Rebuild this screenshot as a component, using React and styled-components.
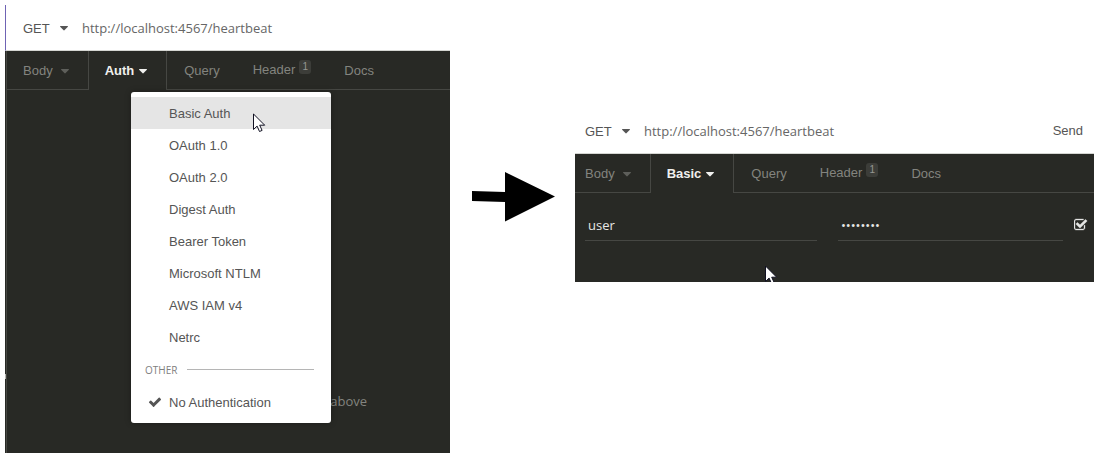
import React from "react";
import styled, { createGlobalStyle } from "styled-components";

const sans = `"Liberation Sans", Arial, sans-serif`;
const open = `"Open Sans", "Noto Sans", sans-serif`;
const dark = "#282925";
const line = "#464743";

const Global = createGlobalStyle`
  *, *::before { box-sizing: border-box; }
  body { margin: 0; background: #fff; font: 13px/20px ${sans}; color: #555; }
  button, input, select { font: inherit; color: inherit; background: none; border: 0; margin: 0; padding: 0; outline: 0; }
  button { cursor: pointer; white-space: nowrap; }
`;

const Page = styled.main`
  display: grid;
  grid-template-columns: minmax(0, 445fr) 125px minmax(0, 519fr);
  align-items: start;
  padding: 5px 7px 13px 5px;
`;

const Panel = styled.section`
  position: relative;
  margin-top: ${(p) => p.$top}px;
`;

const UrlBar = styled.form`
  display: flex;
  align-items: center;
  height: 46px;
  padding: 0 11px 0 ${(p) => p.$inset}px;
  border-bottom: 1px solid #d5d6d2;
  border-left: ${(p) => (p.$edge ? "1px solid #6f63b4" : "0")};
`;

const MethodSelect = styled.select`
  appearance: none;
  width: 34px;
  padding-top: 2px;
`;

const UrlInput = styled.input`
  flex: 1;
  min-width: 0;
  margin-left: 11px;
  font-family: ${open};
  color: #666;
`;

const Workspace = styled.div`
  position: relative;
  height: ${(p) => p.$height}px;
  background: ${dark};
  padding-left: ${(p) => (p.$edge ? 1 : 0)}px;
  overflow: hidden;
`;

const WorkspaceInner = styled.div`
  height: 100%;
  border-left: ${(p) => (p.$edge ? `1px solid ${line}` : "0")};
`;

const Handle = styled.span`
  position: absolute;
  left: 0;
  bottom: 74px;
  width: 1px;
  height: 5px;
  background: #b4b4b0;
`;

const TabList = styled.div`
  display: flex;
  height: 39px;
`;

const TabButton = styled.button`
  display: flex;
  align-items: center;
  gap: ${(p) => (p.$active ? 2 : 5)}px;
  padding: ${(p) => (p.$active || p.$badged ? 0 : 2)}px 16px 0 ${(p) => p.$start ?? 17}px;
  color: ${(p) => (p.$active ? "#f0f0ee" : "#83847f")};
  font-weight: ${(p) => (p.$active ? 700 : 400)};
  border: 0 solid ${line};
  border-width: ${(p) => (p.$active ? "0 1px" : "0 0 1px")};
`;

const TabRest = styled.div`
  flex: 1;
  border-bottom: 1px solid ${line};
`;

const Badge = styled.sup`
  align-self: flex-start;
  margin: 9px 0 0 -1px;
  width: 12px;
  height: 14px;
  border-radius: 3px;
  background: #3c3d39;
  color: #969792;
  font-size: 10px;
  line-height: 14px;
  text-align: center;
`;

const Hint = styled.p`
  margin: 301px 83px 0 0;
  text-align: right;
  font-family: ${open};
  color: #83847f;
`;

const Menu = styled.div`
  position: absolute;
  top: 87px;
  left: 126px;
  width: 200px;
  padding: 5px 0;
  border-radius: 3px;
  background: #fff;
  box-shadow: 0 0 6px rgba(0, 0, 0, 0.3);
`;

const MenuItem = styled.button`
  display: grid;
  grid-template-columns: 14px 1fr;
  gap: 7px;
  align-items: center;
  width: 100%;
  height: 32px;
  padding: 0 17px;
  text-align: left;
  background: ${(p) => (p.$hover ? "#e5e5e5" : "transparent")};
`;

const MenuLabel = styled.span`
  grid-column: 2;
  padding-top: 2px;
`;

const MenuDivider = styled.div`
  display: flex;
  align-items: center;
  gap: 10px;
  height: 33px;
  padding: 0 17px 0 14px;
  font: 10px/16px ${open};
  color: #808080;

  &::after {
    content: "";
    flex: 1;
    height: 1px;
    background: #b5b5b5;
  }
`;

const Credentials = styled.form`
  display: flex;
  align-items: center;
  gap: 21px;
  padding: 16px 7px 0 10px;
`;

const Field = styled.input`
  flex: ${(p) => p.$grow} 1 0;
  min-width: 0;
  height: 32px;
  padding: 0 3px;
  border-bottom: 1px solid ${line};
  font-family: ${open};
  color: #e6e6e4;
`;

const Toggle = styled.label`
  position: relative;
  display: flex;
  margin-left: -10px;
  color: #e6e6e4;

  input { appearance: none; width: 13px; height: 14px; }
  svg { position: absolute; inset: 0; pointer-events: none; }
`;

const ArrowCell = styled.div`
  padding: 166px 20px 0 22px;

  svg { display: block; }
`;

const Pointer = styled.svg`
  position: absolute;
  left: ${(p) => p.$x}px;
  top: ${(p) => p.$y}px;
`;

const Caret = styled.svg`
  flex: none;
  opacity: ${(p) => (p.$dim ? 0.6 : 1)};
`;

const CaretDown = ({ dim }) => (
  <Caret $dim={dim} width="14" height="14" viewBox="0 0 1792 1792" fill="currentColor" aria-hidden="true">
    <path d="M1408 704q0 26-19 45l-448 448q-19 19-45 19t-45-19l-448-448q-19-19-19-45t19-45 45-19h896q26 0 45 19t19 45z" />
  </Caret>
);

const Check = () => (
  <svg width="14" height="14" viewBox="0 0 1792 1792" fill="currentColor" aria-hidden="true">
    <path d="M1671 566q0 40-28 68l-724 724-136 136q-28 28-68 28t-68-28l-136-136-362-362q-28-28-28-68t28-68l136-136q28-28 68-28t68 28l294 295 656-657q28-28 68-28t68 28l136 136q28 28 28 68z" />
  </svg>
);

const CheckSquare = () => (
  <svg width="14" height="14" viewBox="64 0 1792 1792" fill="currentColor" stroke="currentColor" strokeWidth="40" aria-hidden="true">
    <path d="M1472 930v318q0 119-84.5 203.5t-203.5 84.5h-832q-119 0-203.5-84.5t-84.5-203.5v-832q0-119 84.5-203.5t203.5-84.5h832q63 0 117 25 15 7 18 23 3 17-9 29l-49 49q-10 10-23 10-3 0-9-2-23-6-45-6h-832q-66 0-113 47t-47 113v832q0 66 47 113t113 47h832q66 0 113-47t47-113v-254q0-13 9-22l64-64q10-10 23-10 6 0 12 3 20 8 20 29zm231-489l-814 814q-24 24-57 24t-57-24l-430-430q-24-24-24-57t24-57l110-110q24-24 57-24t57 24l263 263 647-647q24-24 57-24t57 24l110 110q24 24 24 57t-24 57z" />
  </svg>
);

const MousePointer = ({ x, y }) => (
  <Pointer $x={x} $y={y} width="13" height="20" viewBox="0 0 13 20" aria-hidden="true">
    <path d="M.5 1v15.5l3.6-3.4 2.4 5.4 2.6-1.1-2.4-5.2h5z" fill="#fff" stroke="#111122" />
  </Pointer>
);

const RequestBar = ({ inset, edge, send }) => (
  <UrlBar $inset={inset} $edge={edge} onSubmit={(e) => e.preventDefault()}>
    <MethodSelect aria-label="Method" defaultValue="GET">
      <option>GET</option>
    </MethodSelect>
    <CaretDown />
    <UrlInput aria-label="Request URL" defaultValue="http://localhost:4567/heartbeat" />
    {send && <button type="submit">Send</button>}
  </UrlBar>
);

const Tabs = ({ start, active }) => (
  <TabList role="tablist">
    <TabButton role="tab" $start={start}>
      Body <CaretDown dim />
    </TabButton>
    <TabButton role="tab" aria-selected="true" $active $start={16}>
      {active} <CaretDown />
    </TabButton>
    <TabButton role="tab">Query</TabButton>
    <TabButton role="tab" $badged>
      Header <Badge>1</Badge>
    </TabButton>
    <TabButton role="tab">Docs</TabButton>
    <TabRest />
  </TabList>
);

const authTypes = [
  "Basic Auth",
  "OAuth 1.0",
  "OAuth 2.0",
  "Digest Auth",
  "Bearer Token",
  "Microsoft NTLM",
  "AWS IAM v4",
  "Netrc",
];

export default function App() {
  return (
    <>
      <Global />
      <Page>
        <Panel $top={0}>
          <RequestBar inset={17} edge />
          <Workspace $height={402} $edge>
            <Handle />
            <WorkspaceInner $edge>
              <Tabs start={16} active="Auth" />
              <Hint>above</Hint>
            </WorkspaceInner>
          </Workspace>
          <Menu role="menu">
            {authTypes.map((name, i) => (
              <MenuItem key={name} role="menuitem" $hover={i === 0}>
                <MenuLabel>{name}</MenuLabel>
              </MenuItem>
            ))}
            <MenuDivider>OTHER</MenuDivider>
            <MenuItem role="menuitem">
              <Check />
              <MenuLabel>No Authentication</MenuLabel>
            </MenuItem>
          </Menu>
          <MousePointer x={248} y={108} />
        </Panel>

        <ArrowCell>
          <svg width="83" height="52" viewBox="0 0 83 52" aria-hidden="true">
            <path d="M0 20l33 1V1l50 24.500L33 50.500V31L0 30z" />
          </svg>
        </ArrowCell>

        <Panel $top={103}>
          <RequestBar inset={10} send />
          <Workspace $height={128}>
            <WorkspaceInner>
              <Tabs start={10} active="Basic" />
              <Credentials>
                <Field $grow={232} aria-label="Username" defaultValue="user" />
                <Field $grow={225} aria-label="Password" type="password" defaultValue="password" />
                <Toggle>
                  <input type="checkbox" aria-label="Enabled" defaultChecked />
                  <CheckSquare />
                </Toggle>
              </Credentials>
            </WorkspaceInner>
            <MousePointer x={190} y={111} />
          </Workspace>
        </Panel>
      </Page>
    </>
  );
}
